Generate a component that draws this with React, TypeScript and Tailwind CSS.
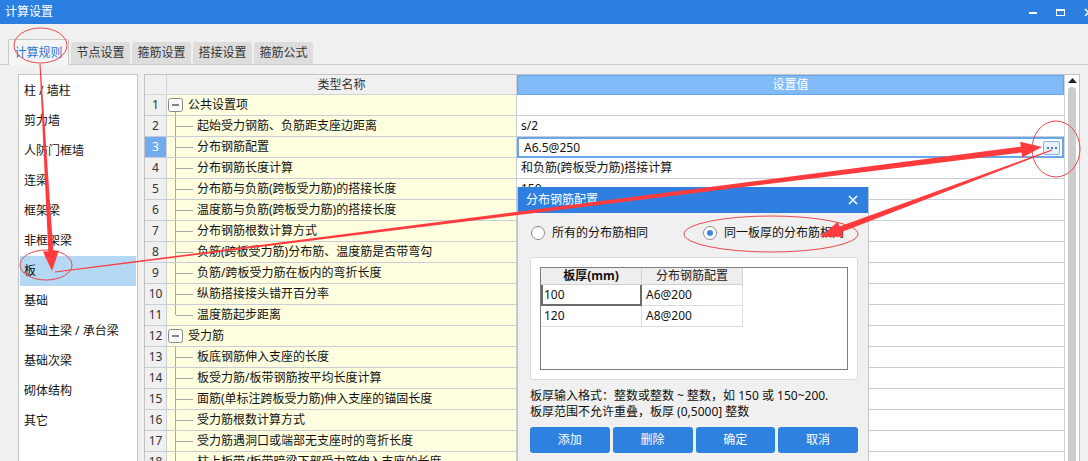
import React from "react";

const FONT = "font-['Noto_Sans','Noto_Sans_CJK_SC',sans-serif]";

const SIDE_ITEMS = [
  "柱 / 墙柱",
  "剪力墙",
  "人防门框墙",
  "连梁",
  "框架梁",
  "非框架梁",
  "板",
  "基础",
  "基础主梁 / 承台梁",
  "基础次梁",
  "砌体结构",
  "其它",
];

const TABS = ["节点设置", "箍筋设置", "搭接设置", "箍筋公式"];

type Row = { name: string; value?: string; group?: boolean; last?: boolean };

const ROWS: Row[] = [
  { name: "公共设置项", group: true },
  { name: "起始受力钢筋、负筋距支座边距离", value: "s/2" },
  { name: "分布钢筋配置", value: "A6.5@250" },
  { name: "分布钢筋长度计算", value: "和负筋(跨板受力筋)搭接计算" },
  { name: "分布筋与负筋(跨板受力筋)的搭接长度", value: "150" },
  { name: "温度筋与负筋(跨板受力筋)的搭接长度", value: "" },
  { name: "分布钢筋根数计算方式", value: "" },
  { name: "负筋(跨板受力筋)分布筋、温度筋是否带弯勾", value: "" },
  { name: "负筋/跨板受力筋在板内的弯折长度", value: "" },
  { name: "纵筋搭接接头错开百分率", value: "" },
  { name: "温度筋起步距离", value: "", last: true },
  { name: "受力筋", group: true },
  { name: "板底钢筋伸入支座的长度", value: "" },
  { name: "板受力筋/板带钢筋按平均长度计算", value: "" },
  { name: "面筋(单标注跨板受力筋)伸入支座的锚固长度", value: "" },
  { name: "受力筋根数计算方式", value: "" },
  { name: "受力筋遇洞口或端部无支座时的弯折长度", value: "" },
  { name: "柱上板带/板带暗梁下部受力筋伸入支座的长度", value: "" },
];

const SELECTED_ROW = 3;

function arrow(x0: number, y0: number, x1: number, y1: number, w0: number, w1: number, hl: number, hw: number) {
  const dx = x1 - x0;
  const dy = y1 - y0;
  const len = Math.hypot(dx, dy);
  const ux = dx / len;
  const uy = dy / len;
  const nx = -uy;
  const ny = ux;
  const bx = x1 - ux * hl;
  const by = y1 - uy * hl;
  const pts = [
    [x0 + (nx * w0) / 2, y0 + (ny * w0) / 2],
    [bx + (nx * w1) / 2, by + (ny * w1) / 2],
    [bx + (nx * hw) / 2, by + (ny * hw) / 2],
    [x1, y1],
    [bx - (nx * hw) / 2, by - (ny * hw) / 2],
    [bx - (nx * w1) / 2, by - (ny * w1) / 2],
    [x0 - (nx * w0) / 2, y0 - (ny * w0) / 2],
  ];
  return pts.map(p => `${p[0].toFixed(1)},${p[1].toFixed(1)}`).join(" ");
}

function TreeLine({ group, last, first }: { group?: boolean; last?: boolean; first?: boolean }) {
  // little tree connector drawn per row
  if (group) {
    return (
      <svg width="22" height="20" className="shrink-0">
        {first && <line x1="8.5" y1="16" x2="8.5" y2="20" stroke="#a8a8a8" />}
        <rect x="1.5" y="3.5" width="14" height="13" rx="2" fill="#fafafa" stroke="#8c8c8c" />
        <line x1="5" y1="10" x2="12" y2="10" stroke="#333" strokeWidth="1.2" />
      </svg>
    );
  }
  return (
    <svg width="30" height="20" className="shrink-0">
      <line x1="8.5" y1="0" x2="8.5" y2={last ? 10 : 20} stroke="#a8a8a8" />
      <line x1="9" y1="10.5" x2="26" y2="10.5" stroke="#a8a8a8" />
    </svg>
  );
}

function TitleBar() {
  return (
    <div className="h-[24px] shrink-0 bg-[#2b7fe1] flex items-center pl-[5px] text-white text-[12px]">
      <span>计算设置</span>
      <div className="ml-auto flex items-center">
        <div className="w-[8px] h-[2px] bg-white mr-[19px] mt-[2px]" />
        <div className="w-[9px] h-[7px] border border-white border-t-2 mr-[19px]" />
        <svg width="9" height="9" viewBox="0 0 9 9" className="mr-[-5px]">
          <path d="M1 1 L8 8 M8 1 L1 8" stroke="white" strokeWidth="1.5" />
        </svg>
      </div>
    </div>
  );
}

function Tabs() {
  return (
    <div className="mt-[15px] h-[26px] shrink-0 flex items-end pl-[8px] border-b border-[#c9c9c9]">
      <div className="w-[61px] h-[26px] mb-[-1px] bg-[#f5f5f5] border border-b-0 border-[#c9c9c9] rounded-t-[2px] flex items-center justify-center text-[12px] text-[#2a78d4]">
        计算规则
      </div>
      {TABS.map((t, i) => (
        <div
          key={t}
          className={`${i === 0 ? "ml-[2px]" : "ml-[2px]"} w-[59px] h-[22px] bg-[#dddddd] rounded-t-[3px] flex items-center justify-center text-[12px] text-[#333]`}
        >
          {t}
        </div>
      ))}
    </div>
  );
}

function Sidebar() {
  return (
    <div className="w-[120px] shrink-0 bg-white border border-[#c3c3c3] p-[1px] pt-[1px] h-[400px]">
      {SIDE_ITEMS.map(item => (
        <div
          key={item}
          className={`h-[30px] flex items-center pl-[4px] text-[12px] text-[#111] ${item === "板" ? "bg-[#b5d8f4]" : ""}`}
        >
          {item}
        </div>
      ))}
    </div>
  );
}

function Table() {
  return (
    <div className="w-[936px] shrink-0 bg-white border border-[#c3c3c3] flex h-[400px]">
      <div className="w-[919px] flex flex-col">
        {/* header */}
        <div className="h-[20px] flex shrink-0">
          <div className="w-[22px] bg-[#f0f0f0] border-r border-b border-[#d4d4d4]" />
          <div className="w-[350px] bg-[#f0f0f0] border-r border-b border-[#d4d4d4] flex items-center justify-center text-[12px] text-[#333]">
            类型名称
          </div>
          <div className="w-[547px] bg-[#80bbf7] border border-[#64a5ee] flex items-center justify-center text-[12px] text-white">
            设置值
          </div>
        </div>
        {ROWS.map((r, i) => {
          const n = i + 1;
          const sel = n === SELECTED_ROW;
          return (
            <div key={n} className="h-[21px] flex shrink-0">
              <div
                className={`w-[22px] border-r border-b border-[#c9cdd5] flex items-center justify-center text-[12px] ${sel ? "bg-[#72abee] text-white" : "bg-[#f0f0f0] text-[#333]"}`}
              >
                {n}
              </div>
              <div className="w-[350px] bg-[#ffffe0] border-r border-b border-[#c9cdd5] flex items-center pl-[0px] text-[12px] text-[#111]">
                <TreeLine group={r.group} last={r.last} first={n === 1} />
                <span className={r.group ? "ml-[-1px]" : ""}>{r.name}</span>
              </div>
              {sel ? (
                <div className="w-[547px] bg-white border-2 border-[#6aa6ea] flex items-center pl-[5px] pr-[2px] text-[12px] text-[#111]">
                  <span>{r.value}</span>
                  <div className="ml-auto w-[17px] h-[14px] rounded-[2px] border border-[#7fb0ea] bg-[#eaf2fc] flex items-center justify-center gap-[2px]">
                    <span className="w-[2px] h-[2px] bg-[#3b82d6]" />
                    <span className="w-[2px] h-[2px] bg-[#3b82d6]" />
                    <span className="w-[2px] h-[2px] bg-[#3b82d6]" />
                  </div>
                </div>
              ) : (
                <div className="w-[547px] bg-white border-b border-[#c9cdd5] flex items-center pl-[4px] text-[12px] text-[#111]">
                  {r.value}
                </div>
              )}
            </div>
          );
        })}
      </div>
      {/* scrollbar */}
      <div className="w-[15px] border-l border-[#d4d4d4] bg-white flex flex-col items-center pt-[3px]">
        <svg width="9" height="5" viewBox="0 0 9 5">
          <path d="M0 5 L4.5 0 L9 5 Z" fill="#222" />
        </svg>
        <div className="mt-[4px] w-[8px] flex-1 bg-[#cdcdcd] rounded-t-[4px]" />
      </div>
    </div>
  );
}

function Radio({ checked, label }: { checked?: boolean; label: string }) {
  return (
    <div className="flex items-center gap-[7px]">
      <div className="w-[14px] h-[14px] rounded-full border border-[#8a8a8a] bg-white flex items-center justify-center">
        {checked && <div className="w-[6px] h-[6px] rounded-full bg-[#3a86e2]" />}
      </div>
      <span className="text-[12px] text-[#111]">{label}</span>
    </div>
  );
}

function Dialog() {
  return (
    <div className="absolute left-[517px] top-[187px] w-[352px] h-[290px] bg-[#f0f0f0] border-x border-[#b9c3cf] flex flex-col">
      <div className="h-[26px] shrink-0 bg-[#2e7fdf] flex items-center pl-[8px] pr-[10px] text-white text-[12px]">
        <span>分布钢筋配置</span>
        <svg width="10" height="10" viewBox="0 0 10 10" className="ml-auto">
          <path d="M1 1 L9 9 M9 1 L1 9" stroke="white" strokeWidth="1.6" />
        </svg>
      </div>
      <div className="pl-[13px] pr-[10px] flex flex-col">
        <div className="mt-[12px] h-[16px] flex items-center">
          <div className="w-[172px]">
            <Radio label="所有的分布筋相同" />
          </div>
          <Radio checked label="同一板厚的分布筋相同" />
        </div>
        <div className="mt-[16px] ml-[-1px] w-[328px] h-[123px] bg-white border border-[#dadada] rounded-[3px] p-[9px]">
          <div className="w-full h-full border border-[#7d7d7d] bg-white">
            <div className="flex h-[17px] text-[12px]">
              <div className="w-[101px] bg-[#eeeeee] border-r border-b border-[#d2d2d2] flex items-center justify-center font-bold text-[#111]">
                板厚(mm)
              </div>
              <div className="w-[101px] bg-[#eeeeee] border-r border-b border-[#d2d2d2] flex items-center justify-center text-[#222]">
                分布钢筋配置
              </div>
            </div>
            <div className="flex h-[21px] text-[12px]">
              <div className="w-[101px] border-2 border-t-0 border-[#6b6b6b] flex items-center pl-[1px] text-[#111]">
                100
              </div>
              <div className="w-[101px] border-r border-b border-[#dcdcdc] flex items-center pl-[4px] text-[#111]">
                A6@200
              </div>
            </div>
            <div className="flex h-[21px] text-[12px]">
              <div className="w-[101px] border-r border-b border-[#dcdcdc] flex items-center pl-[3px] text-[#111]">
                120
              </div>
              <div className="w-[101px] border-r border-b border-[#dcdcdc] flex items-center pl-[4px] text-[#111]">
                A8@200
              </div>
            </div>
          </div>
        </div>
        <div className="mt-[8px] ml-[-1px] text-[12px] leading-[16px] text-[#111]">
          <div>板厚输入格式：整数或整数 ~ 整数，如 150 或 150~200.</div>
          <div>板厚范围不允许重叠，板厚 (0,5000] 整数</div>
        </div>
        <div className="mt-[7px] ml-[-1px] flex gap-[3px]">
          {["添加", "删除", "确定", "取消"].map(b => (
            <div
              key={b}
              className="w-[80px] h-[26px] rounded-[3px] bg-[#2f81e0] text-white text-[12px] flex items-center justify-center"
            >
              {b}
            </div>
          ))}
        </div>
      </div>
    </div>
  );
}

function Annotations() {
  const red = "#ff3b3d";
  const ring = "#e8464c";
  return (
    <svg className="absolute inset-0 pointer-events-none" width="1088" height="461">
      <ellipse cx="40.5" cy="45.5" rx="26.5" ry="17.5" fill="none" stroke={ring} strokeWidth="1" />
      <ellipse cx="46" cy="265" rx="26" ry="15" fill="none" stroke={ring} strokeWidth="1" />
      <ellipse cx="1056" cy="149" rx="24" ry="28" fill="none" stroke={ring} strokeWidth="1" />
      <ellipse cx="771" cy="234" rx="87" ry="18" fill="none" stroke={ring} strokeWidth="1" />
      <polygon points={arrow(40, 64, 52, 271, 1, 5, 20, 16)} fill={red} />
      <polygon points={arrow(55, 272, 1042, 147, 1, 6, 21, 16)} fill={red} />
      <polygon points={arrow(1052, 150, 820, 237, 1, 6, 22, 16)} fill={red} />
    </svg>
  );
}

export default function App() {
  return (
    <div className={`relative w-[1088px] h-[461px] overflow-hidden bg-[#f0f0f0] flex flex-col ${FONT}`}>
      <TitleBar />
      <Tabs />
      <div className="mt-[9px] pl-[18px] flex gap-[6px] items-start">
        <Sidebar />
        <Table />
      </div>
      <Dialog />
      <Annotations />
    </div>
  );
}
